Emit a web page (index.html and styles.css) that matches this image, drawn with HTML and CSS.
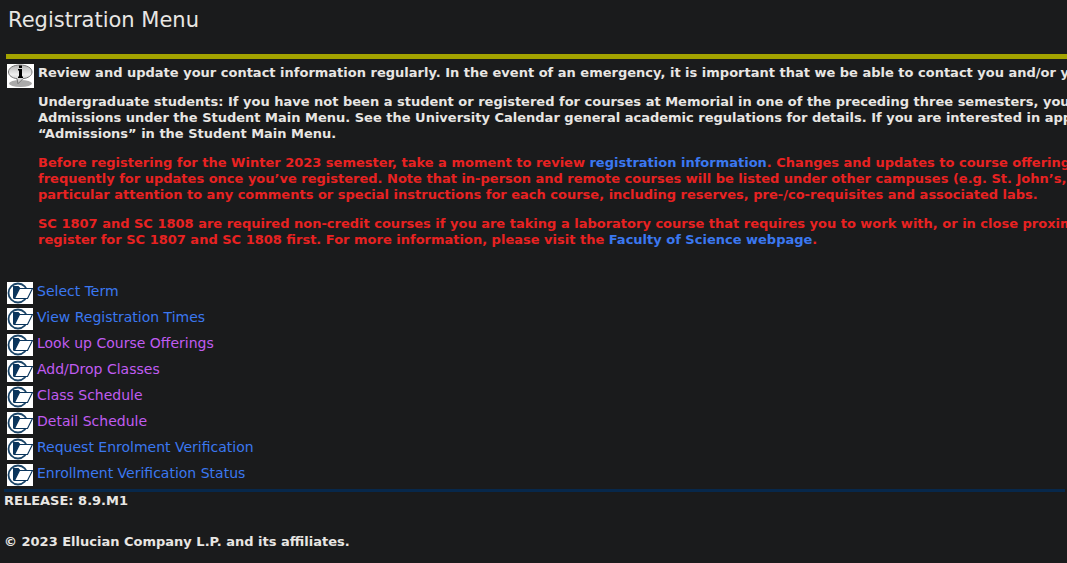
FILE: index.html
```html
<!DOCTYPE html>
<html lang="en">
<head>
<meta charset="utf-8">
<title>Registration Menu</title>
<link rel="stylesheet" href="styles.css">
</head>
<body>
<svg class="defs" width="0" height="0" aria-hidden="true">
  <symbol id="folder" viewBox="0 0 26 22">
    <rect width="26" height="22" fill="#fff"/>
    <circle cx="11" cy="11" r="9.5" fill="none" stroke="#1b4568" stroke-width="1.800"/>
    <path d="M6 16.500V4.500h5.500l1.500 2-4.500 10z" fill="#0b355c"/>
    <path d="M6 4.500h5.500l1.500 2h7" fill="none" stroke="#0b355c" stroke-width="1"/>
    <path d="M12.500 6.500H25.500L20.500 16.500H7.500z" fill="#fff" stroke="#0b355c" stroke-width="1.200"/>
  </symbol>
</svg>
<header class="page-header">
  <h1 class="title">Registration Menu</h1>
</header>
<main>
  <section class="info">
    <svg class="info-icon" viewBox="0 0 27 24" role="img" aria-label="Information">
      <defs>
        <linearGradient id="bubble" x1="0" y1="0" x2="0" y2="1">
          <stop offset="0" stop-color="#b5b5b5"/>
          <stop offset=".5" stop-color="#eee"/>
          <stop offset="1" stop-color="#bbb"/>
        </linearGradient>
      </defs>
      <rect width="27" height="24" fill="#fff"/>
      <ellipse cx="13.500" cy="19.500" rx="11.500" ry="3.500" fill="#aaa"/>
      <path d="M13 1C6 1 1.500 4 1.500 8c0 3.500 3.500 6 8.500 6.700l1 5 5-5c5.500-.7 9-3.200 9-6.700 0-4-5-7-12-7z" fill="url(#bubble)" stroke="#777" stroke-width="1"/>
      <path d="M12 1.500h3V4h-3zM11 5h4v7.500h1V14h-5v-1.500h1V6.500h-1z" fill="#000"/>
    </svg>
    <div class="info-text">
      <p>Review and update your contact information regularly. In the event of an emergency, it is important that we be able to contact you and/or yo</p>
      <p>Undergraduate students: If you have not been a student or registered for courses at Memorial in one of the preceding three semesters, your<br>Admissions under the Student Main Menu. See the University Calendar general academic regulations for details. If you are interested in apply<br>“Admissions” in the Student Main Menu.</p>
      <p class="alert">Before registering for the Winter 2023 semester, take a moment to review <a href="#">registration information</a>. Changes and updates to course offerings<br>frequently for updates once you’ve registered. Note that in-person and remote courses will be listed under other campuses (e.g. St. John’s, G<br>particular attention to any comments or special instructions for each course, including reserves, pre-/co-requisites and associated labs.</p>
      <p class="alert">SC 1807 and SC 1808 are required non-credit courses if you are taking a laboratory course that requires you to work with, or in close proxim<br>register for SC 1807 and SC 1808 first. For more information, please visit the <a href="#">Faculty of Science webpage</a>.</p>
    </div>
  </section>
  <nav>
    <ul class="menu">
      <li><svg class="folder" aria-hidden="true"><use href="#folder"/></svg><a href="#">Select Term</a></li>
      <li><svg class="folder" aria-hidden="true"><use href="#folder"/></svg><a href="#">View Registration Times</a></li>
      <li><svg class="folder" aria-hidden="true"><use href="#folder"/></svg><a class="seen" href="#">Look up Course Offerings</a></li>
      <li><svg class="folder" aria-hidden="true"><use href="#folder"/></svg><a class="seen" href="#">Add/Drop Classes</a></li>
      <li><svg class="folder" aria-hidden="true"><use href="#folder"/></svg><a class="seen" href="#">Class Schedule</a></li>
      <li><svg class="folder" aria-hidden="true"><use href="#folder"/></svg><a class="seen" href="#">Detail Schedule</a></li>
      <li><svg class="folder" aria-hidden="true"><use href="#folder"/></svg><a href="#">Request Enrolment Verification</a></li>
      <li><svg class="folder" aria-hidden="true"><use href="#folder"/></svg><a href="#">Enrollment Verification Status</a></li>
    </ul>
  </nav>
</main>
<footer class="footer">
  <p>RELEASE: 8.9.M1</p>
  <p>© 2023 Ellucian Company L.P. and its affiliates.</p>
</footer>
</body>
</html>
```
FILE: styles.css
```css
body {
  margin: 0;
  background: #1a1b1c;
  color: #e8e6e3;
  font-family: Verdana, "DejaVu Sans", sans-serif;
  font-size: 13px;
  line-height: 16px;
  overflow-x: hidden;
}
p, h1, ul { margin: 0; padding: 0; }
a { color: #3b78f0; text-decoration: none; }
.defs { position: absolute; }
.page-header {
  margin-left: 6px;
  padding: 6px 2px 20px;
  border-bottom: 5px solid #a3a300;
}
.title {
  font-size: 21px;
  font-weight: 400;
  line-height: 28px;
}
.info {
  display: flex;
  align-items: flex-start;
  gap: 4px;
  padding: 5px 0 0 7px;
  overflow: hidden;
}
.info-icon { width: 27px; height: 24px; flex: none; }
.info-text {
  display: flex;
  flex-direction: column;
  gap: 13px;
  padding-top: 1px;
  font-weight: 700;
  white-space: nowrap;
}
.alert { color: #e82222; }
.menu {
  display: flex;
  flex-direction: column;
  gap: 4px;
  margin: 34px 0 3px 7px;
  list-style: none;
  font-size: 14px;
}
.menu li {
  display: flex;
  gap: 4px;
  height: 22px;
  line-height: 18px;
}
.folder { width: 26px; height: 22px; flex: none; }
.menu .seen { color: #c05cf0; }
.footer {
  display: flex;
  flex-direction: column;
  gap: 25px;
  margin: 0 2px 0 4px;
  padding-top: 1px;
  border-top: 3px solid #07284b;
  font-weight: 700;
}
```
